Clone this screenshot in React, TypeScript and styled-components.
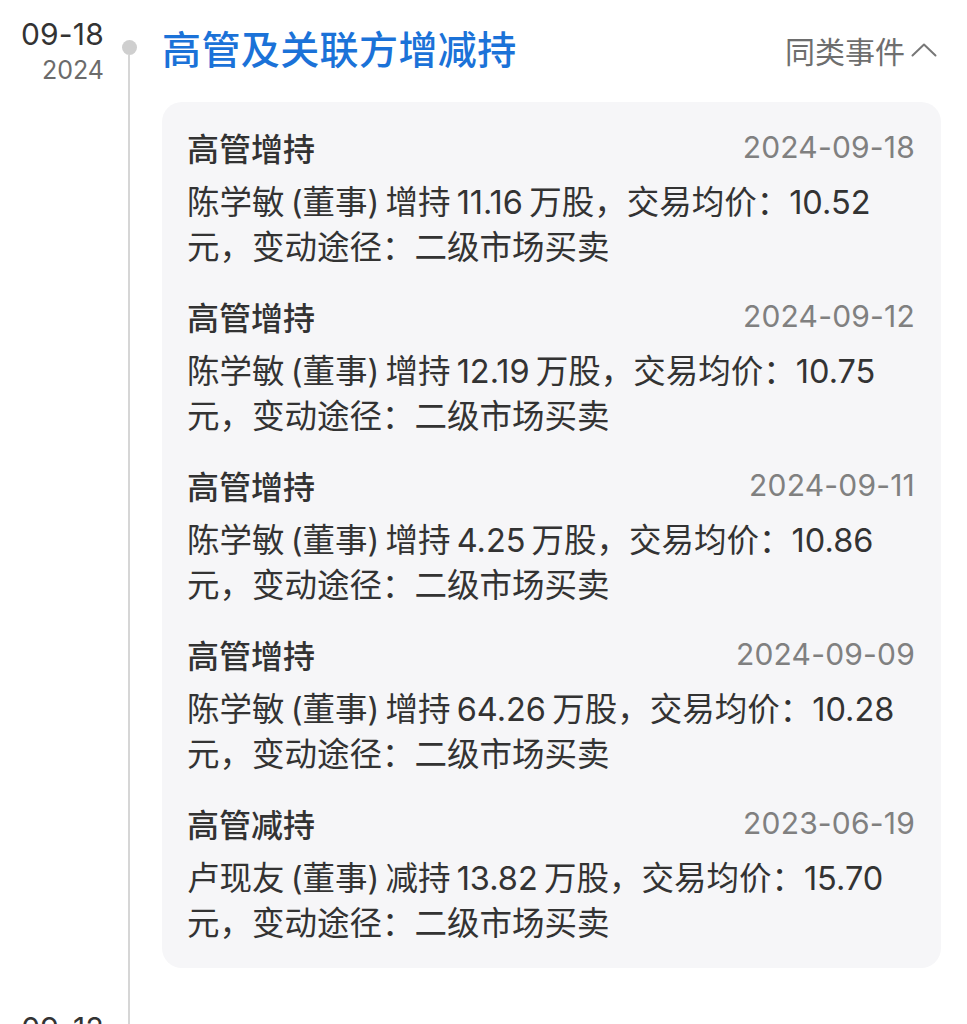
import React from "react";
import styled, { createGlobalStyle } from "styled-components";

const Global = createGlobalStyle`
  html, body { margin: 0; padding: 0; background: #ffffff; }
  body { font-family: "Inter", "Noto Sans CJK SC", sans-serif; color: #333; }
`;

const Page = styled.div`
  width: 967px;
  height: 1024px;
  overflow: hidden;
  background: #fff;
`;

const Group = styled.section`
  display: grid;
  grid-template-columns: 104px 50px 1fr;
  padding-right: 26px;
`;

const DateCol = styled.div`
  display: flex;
  flex-direction: column;
  align-items: flex-end;
  padding-top: 14px;
`;

const Day = styled.div`
  font-size: 30px;
  line-height: 40px;
  color: #333;
  letter-spacing: 0.2px;
`;

const Year = styled.div`
  font-size: 25px;
  line-height: 32px;
  color: #6b6b6b;
`;

const Axis = styled.div`
  display: flex;
  flex-direction: column;
  align-items: center;
`;

const AxisLine = styled.div<{ $h?: number; $hidden?: boolean }>`
  width: 1.5px;
  background: ${(p) => (p.$hidden ? "transparent" : "#d6d6d6")};
  ${(p) => (p.$h !== undefined ? `height: ${p.$h}px; flex: none;` : `flex: 1;`)}
`;

const Dot = styled.div`
  width: 15px;
  height: 15px;
  border-radius: 50%;
  background: #cfcfcf;
  flex: none;
`;

const Content = styled.div`
  padding-top: 20px;
  padding-left: 8px;
  padding-bottom: 26px;
`;

const HeadRow = styled.div`
  display: flex;
  align-items: center;
  justify-content: space-between;
  height: 60px;
  margin-bottom: 22px;
`;

const Title = styled.h2`
  margin: 0;
  font-size: 39px;
  line-height: 60px;
  font-weight: 500;
  color: #1b72d8;
  letter-spacing: 0.4px;
`;

const Toggle = styled.button`
  display: flex;
  align-items: center;
  gap: 6px;
  border: 0;
  background: none;
  padding: 0;
  font-family: inherit;
  font-size: 30px;
  color: #6e6e6e;
  margin-right: 4px;
`;

const Card = styled.div`
  background: #f6f6f8;
  border-radius: 20px;
  padding: 23px 26px 22px 25px;
  display: flex;
  flex-direction: column;
  gap: 24px;
`;

const Item = styled.div`
  display: flex;
  flex-direction: column;
`;

const ItemHead = styled.div`
  display: flex;
  justify-content: space-between;
  align-items: center;
  height: 44px;
  margin-bottom: 11px;
`;

const ItemTitle = styled.div`
  font-size: 32px;
  font-weight: 500;
  color: #333;
`;

const ItemDate = styled.div`
  font-size: 30px;
  color: #808080;
  letter-spacing: 0.2px;
`;

const Body = styled.div`
  font-size: 32.5px;
  line-height: 45px;
  color: #333;
  word-spacing: -3px;
  padding-right: 14px;
`;

type Ev = { title: string; date: string; text: string };

const events: Ev[] = [
  { title: "高管增持", date: "2024-09-18", text: "陈学敏 (董事) 增持 11.16 万股，交易均价：10.52 元，变动途径：二级市场买卖" },
  { title: "高管增持", date: "2024-09-12", text: "陈学敏 (董事) 增持 12.19 万股，交易均价：10.75 元，变动途径：二级市场买卖" },
  { title: "高管增持", date: "2024-09-11", text: "陈学敏 (董事) 增持 4.25 万股，交易均价：10.86 元，变动途径：二级市场买卖" },
  { title: "高管增持", date: "2024-09-09", text: "陈学敏 (董事) 增持 64.26 万股，交易均价：10.28 元，变动途径：二级市场买卖" },
  { title: "高管减持", date: "2023-06-19", text: "卢现友 (董事) 减持 13.82 万股，交易均价：15.70 元，变动途径：二级市场买卖" },
];

const ChevronUp = () => (
  <svg width="26" height="14" viewBox="0 0 26 14" fill="none">
    <polyline points="1.5,12.5 13,1.5 24.5,12.5" stroke="#777" strokeWidth="2" strokeLinecap="round" strokeLinejoin="round" />
  </svg>
);

export default function App() {
  return (
    <Page>
      <Global />
      <Group>
        <DateCol>
          <Day>09-18</Day>
          <Year>2024</Year>
        </DateCol>
        <Axis>
          <AxisLine $h={40} $hidden />
          <Dot />
          <AxisLine />
        </Axis>
        <Content>
          <HeadRow>
            <Title>高管及关联方增减持</Title>
            <Toggle>
              同类事件
              <ChevronUp />
            </Toggle>
          </HeadRow>
          <Card>
            {events.map((e, i) => (
              <Item key={i}>
                <ItemHead>
                  <ItemTitle>{e.title}</ItemTitle>
                  <ItemDate>{e.date}</ItemDate>
                </ItemHead>
                <Body>{e.text}</Body>
              </Item>
            ))}
          </Card>
        </Content>
      </Group>
      <Group>
        <DateCol>
          <Day>09-12</Day>
          <Year>2024</Year>
        </DateCol>
        <Axis>
          <AxisLine $h={40} />
          <Dot />
          <AxisLine />
        </Axis>
        <Content>
          <HeadRow>
            <Title>高管及关联方增减持</Title>
          </HeadRow>
        </Content>
      </Group>
    </Page>
  );
}
